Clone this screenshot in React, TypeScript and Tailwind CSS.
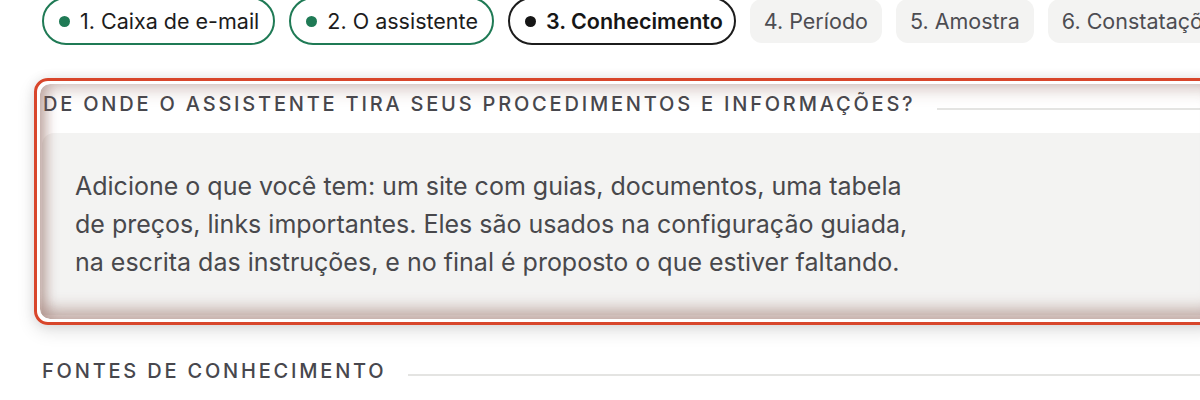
import React from 'react';

type Step = { label: string; state: 'done' | 'current' | 'todo' };

const steps: Step[] = [
  { label: '1. Caixa de e-mail', state: 'done' },
  { label: '2. O assistente', state: 'done' },
  { label: '3. Conhecimento', state: 'current' },
  { label: '4. Período', state: 'todo' },
  { label: '5. Amostra', state: 'todo' },
  { label: '6. Constatações', state: 'todo' },
];

const StepTab: React.FC<{ step: Step }> = ({ step }) => {
  if (step.state === 'todo') {
    return (
      <div className="h-[44px] shrink-0 px-[14px] flex items-center rounded-[12px] bg-[#f3f3f2] text-[21.5px] text-[#4d4d52] whitespace-nowrap">
        {step.label}
      </div>
    );
  }
  const current = step.state === 'current';
  return (
    <div
      className={`h-[48px] shrink-0 pl-[15px] flex items-center gap-[10px] rounded-full border-2 whitespace-nowrap text-[21.5px] ${
        current ? 'pr-[11px] border-[#1c1c1c] font-semibold text-[#161616]' : 'pr-[14px] border-[#1f7a55] text-[#1c1c1c]'
      }`}
    >
      <span className={`w-[11px] h-[11px] rounded-full ${current ? 'bg-[#161616]' : 'bg-[#1f7a55]'}`} />
      {step.label}
    </div>
  );
};

export default function App() {
  return (
    <div className="w-[1200px] h-[400px] overflow-hidden bg-white font-['Inter','Liberation_Sans',sans-serif]">
      <div className="-mt-[3px] pl-[42px] flex items-center gap-[14px] h-[48px]">
        {steps.map(s => (
          <StepTab key={s.label} step={s} />
        ))}
      </div>

      {/* highlighted section */}
      <div className="mt-[33px] ml-[34px] -mr-[20px] rounded-[14px] border-[3px] border-[#d8462b] p-[3px] shadow-[0_6px_18px_rgba(0,0,0,0.12),0_0_12px_rgba(0,0,0,0.08)]">
        <div className="rounded-[10px] overflow-hidden relative pb-[4px]">
          <div className="flex items-center h-[44px] pl-[3px]">
            <h2 className="text-[20px] tracking-[0.14em] uppercase text-[#47474d] font-medium whitespace-nowrap leading-none pb-[5px]">
              De onde o assistente tira seus procedimentos e informações?
            </h2>
            <div className="flex-1 ml-[22px] h-[2px] bg-[#e4e4e2] mt-[6px]" />
          </div>
          <div className="ml-[2px] mt-[5px] rounded-tl-[12px] bg-[#f3f3f2] pl-[33px] pt-[34px] pb-[34px] text-[25px] leading-[38px] text-[#48484c]">
            <p>
              <span className="block">Adicione o que você tem: um site com guias, documentos, uma tabela</span>
              <span className="block">de preços, links importantes. Eles são usados na configuração guiada,</span>
              <span className="block">na escrita das instruções, e no final é proposto o que estiver faltando.</span>
            </p>
          </div>
          <div className="pointer-events-none absolute inset-0 rounded-[10px] shadow-[inset_0_-12px_14px_rgba(140,95,85,0.38),inset_8px_0_12px_rgba(140,95,85,0.30),inset_0_10px_14px_rgba(140,95,85,0.18)]" />
        </div>
      </div>

      <div className="mt-[36px] pl-[42px] flex items-center">
        <h2 className="text-[20px] tracking-[0.14em] uppercase text-[#47474d] font-medium whitespace-nowrap leading-none">
          Fontes de conhecimento
        </h2>
        <div className="flex-1 ml-[22px] h-[2px] bg-[#e4e4e2] mt-[8px]" />
      </div>
      <div className="mt-[20px] ml-[62px] h-[2px] bg-[#ececea]" />
    </div>
  );
}
